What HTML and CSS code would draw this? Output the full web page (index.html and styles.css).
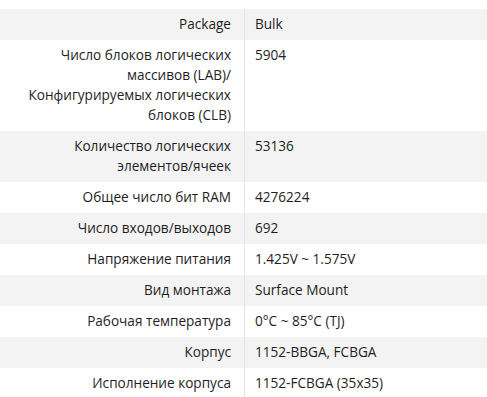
FILE: index.html
```html
<!DOCTYPE html>
<html lang="ru">
<head>
<meta charset="utf-8">
<link rel="stylesheet" href="styles.css">
</head>
<body>
<div class="specs">
  <div class="row alt"><div class="label">Package</div><div class="value">Bulk</div></div>
  <div class="row"><div class="label">Число блоков логических массивов (LAB)/ Конфигурируемых логических блоков (CLB)</div><div class="value">5904</div></div>
  <div class="row alt"><div class="label">Количество логических элементов/ячеек</div><div class="value">53136</div></div>
  <div class="row"><div class="label">Общее число бит RAM</div><div class="value">4276224</div></div>
  <div class="row alt"><div class="label">Число входов/выходов</div><div class="value">692</div></div>
  <div class="row"><div class="label">Напряжение питания</div><div class="value">1.425V ~ 1.575V</div></div>
  <div class="row alt"><div class="label">Вид монтажа</div><div class="value">Surface Mount</div></div>
  <div class="row"><div class="label">Рабочая температура</div><div class="value">0°C ~ 85°C (TJ)</div></div>
  <div class="row alt"><div class="label">Корпус</div><div class="value">1152-BBGA, FCBGA</div></div>
  <div class="row"><div class="label">Исполнение корпуса</div><div class="value">1152-FCBGA (35x35)</div></div>
</div>
</body>
</html>
```
FILE: styles.css
```css
html, body {
  margin: 0;
  padding: 0;
  background: #ffffff;
}
body {
  font-family: "Open Sans", "Noto Sans", sans-serif;
  font-size: 13.6px;
  color: #1e1e1e;
}
.specs {
  margin-top: 9px;
  display: flex;
  flex-direction: column;
}
.row {
  display: grid;
  grid-template-columns: 245px 1fr;
  background: #ffffff;
}
.row.alt {
  background: #f3f3f3;
}
.label {
  text-align: right;
  padding: 5px 13px 6px 20px;
  line-height: 20px;
  border-right: 1px solid #e4e4e4;
}
.value {
  padding: 5px 10px 6px 10px;
  line-height: 20px;
}
```
